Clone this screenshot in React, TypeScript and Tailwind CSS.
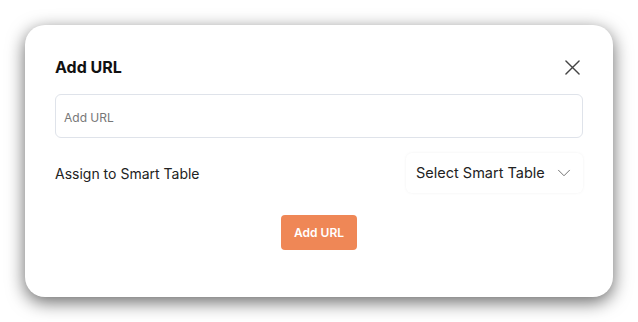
import { ChevronDown } from 'lucide-react';

export default function App() {
  return (
    <div className="flex h-[322px] w-[638px] bg-white p-[25px]" style={{ fontFamily: 'Inter, "Noto Sans", sans-serif' }}>
      <div className="flex flex-1 flex-col rounded-[20px] bg-white px-[30px] pt-[31px] shadow-[0_5px_18px_rgba(0,0,0,0.6)]">
        <div className="flex items-center justify-between">
          <h2 className="text-[16px] font-bold leading-[22px] text-[#111]">Add URL</h2>
          <svg width="15" height="15" viewBox="0 0 16 16" className="mr-[3px] text-[#444]">
            <path d="M1 1 15 15M15 1 1 15" stroke="currentColor" strokeWidth="1.5" strokeLinecap="round" />
          </svg>
        </div>
        <div className="mt-[16px] flex h-[44px] items-center rounded-[6px] border border-[#dfe3ea] px-[8px] pt-[3px]">
          <span className="text-[12px] text-[#777]">Add URL</span>
        </div>
        <div className="mt-[15px] flex items-center justify-between">
          <span className="text-[14px] text-[#222]">Assign to Smart Table</span>
          <div className="flex h-[40px] w-[177px] items-center justify-between rounded-[6px] pl-[10px] pr-[8px] shadow-[0_0_3px_rgba(0,0,0,0.06)]">
            <span className="text-[14.5px] text-[#222]">Select Smart Table</span>
            <ChevronDown size={22} strokeWidth={1} className="text-[#666]" />
          </div>
        </div>
        <div className="mt-[22px] flex justify-center">
          <button className="h-[35px] w-[76px] rounded-[4px] bg-[#ef8756] text-[12px] font-semibold text-white">Add URL</button>
        </div>
      </div>
    </div>
  );
}
